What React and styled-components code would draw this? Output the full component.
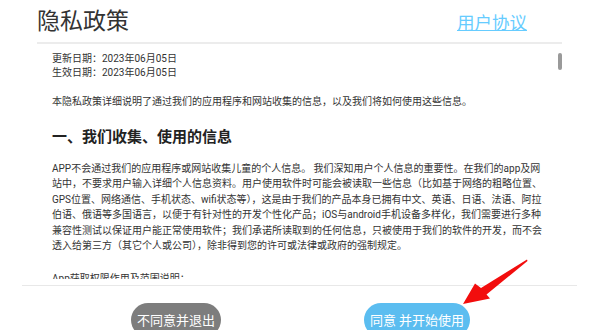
import styled, { createGlobalStyle } from 'styled-components';

const GlobalStyle = createGlobalStyle`
  html, body {
    margin: 0;
    padding: 0;
    background: #fff;
  }
  body {
    font-family: Roboto, "Noto Sans CJK SC", sans-serif;
    color: #333;
  }
`;

const Page = styled.div`
  position: relative;
  width: 600px;
  height: 330px;
  overflow: hidden;
  background: #fff;
`;

const Header = styled.div`
  display: flex;
  justify-content: space-between;
  align-items: flex-end;
  height: 42px;
  margin: 0 38px 0 37px;
  border-bottom: 2px solid #ececec;
`;

const Title = styled.h1`
  margin: 0;
  font-size: 23px;
  font-weight: 400;
  line-height: 28px;
  color: #333;
  padding-bottom: 6px;
`;

const Link = styled.a`
  margin-right: 35px;
  padding-bottom: 8px;
  font-size: 17.5px;
  line-height: 22px;
  color: #6cf;
  text-decoration: underline;
  text-underline-offset: 1px;
  text-decoration-thickness: 1px;
`;

const Scroll = styled.div`
  position: relative;
  height: 235px;
  margin: 0 38px 0 37px;
  overflow: hidden;
`;

const Thumb = styled.div`
  position: absolute;
  top: 9px;
  right: 0;
  width: 4px;
  height: 17px;
  border-radius: 2px;
  background: #9a9a9a;
`;

const Content = styled.div`
  width: 491px;
  padding: 8px 0 0 15px;
  font-size: 10px;
  color: #333;
`;

const Dates = styled.div`
  line-height: 14px;
`;

const Paragraph = styled.p`
  margin: ${({ $top }) => $top}px 0 0;
  line-height: 15.5px;
`;

const Heading = styled.h2`
  margin: 17px 0 0;
  font-size: 15px;
  font-weight: 700;
  line-height: 20px;
  color: #222;
`;

const Footer = styled.div`
  display: flex;
  justify-content: center;
  gap: 143px;
  margin: 6px 23px 0 22px;
  padding: 17px 0 0 2px;
  border-top: 1px solid #e8e8e8;
`;

const Button = styled.button`
  height: 34px;
  padding: 0 6px;
  border: none;
  border-radius: 17px;
  background: ${({ $primary }) => ($primary ? '#5bbdf0' : '#7d7d7d')};
  color: #fff;
  font-family: "Noto Sans CJK SC", Roboto, sans-serif;
  font-size: 13px;
  line-height: 34px;
  white-space: pre;
`;

const Arrow = styled.svg`
  position: absolute;
  left: 0;
  top: 0;
  pointer-events: none;
`;

export default function App() {
  return (
    <Page>
      <GlobalStyle />
      <Header>
        <Title>隐私政策</Title>
        <Link>用户协议</Link>
      </Header>
      <Scroll>
        <Thumb />
        <Content>
          <Dates>
            更新日期：2023年06月05日
            <br />
            生效日期：2023年06月05日
          </Dates>
          <Paragraph $top={14}>
            本隐私政策详细说明了通过我们的应用程序和网站收集的信息，以及我们将如何使用这些信息。
          </Paragraph>
          <Heading>一、我们收集、使用的信息</Heading>
          <Paragraph $top={14}>
            APP不会通过我们的应用程序或网站收集儿童的个人信息。 我们深知用户个人信息的重要性。在我们的app及网站中，不要求用户输入详细个人信息资料。用户使用软件时可能会被读取一些信息（比如基于网络的粗略位置、GPS位置、网络通信、手机状态、wifi状态等），这是由于我们的产品本身已拥有中文、英语、日语、法语、阿拉伯语、俄语等多国语言，以便于有针对性的开发个性化产品；iOS与android手机设备多样化，我们需要进行多种兼容性测试以保证用户能正常使用软件；我们承诺所读取到的任何信息，只被使用于我们的软件的开发，而不会透入给第三方（其它个人或公司），除非得到您的许可或法律或政府的强制规定。
          </Paragraph>
          <Paragraph $top={17}>App获取权限作用及范围说明：</Paragraph>
        </Content>
      </Scroll>
      <Footer>
        <Button>不同意并退出</Button>
        <Button $primary>同意 并开始使用</Button>
      </Footer>
      <Arrow width="600" height="330" viewBox="0 0 600 330">
        <polygon
          points="527,259.5 481,288 475,283.5 463,304 490,298.5 486.5,294.5 527.5,261"
          fill="#f20d0d"
        />
      </Arrow>
    </Page>
  );
}
